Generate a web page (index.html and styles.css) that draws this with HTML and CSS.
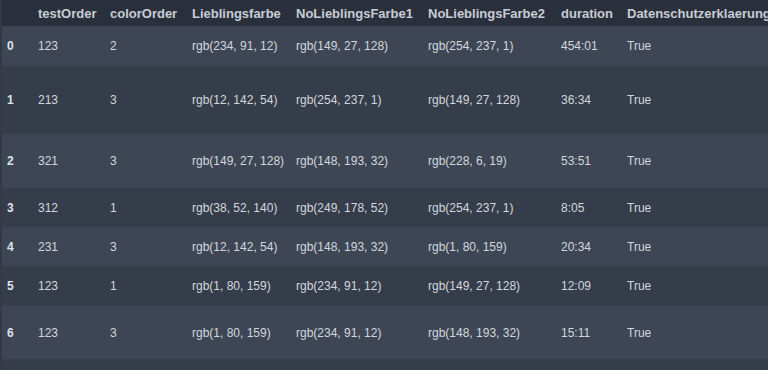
FILE: index.html
```html
<!DOCTYPE html>
<html>
<head>
<meta charset="utf-8">
<link rel="stylesheet" href="styles.css">
</head>
<body>
<div class="wrap">
<table class="df">
<colgroup>
<col class="c0"><col class="c1"><col class="c2"><col class="c3"><col class="c4"><col class="c5"><col class="c6"><col class="c7">
</colgroup>
<thead>
<tr><th></th><th>testOrder</th><th>colorOrder</th><th>Lieblingsfarbe</th><th>NoLieblingsFarbe1</th><th>NoLieblingsFarbe2</th><th>duration</th><th>Datenschutzerklaerung</th></tr>
</thead>
<tbody>
<tr class="odd h40"><th>0</th><td>123</td><td>2</td><td>rgb(234, 91, 12)</td><td>rgb(149, 27, 128)</td><td>rgb(254, 237, 1)</td><td>454:01</td><td>True</td></tr>
<tr class="even h68"><th>1</th><td>213</td><td>3</td><td>rgb(12, 142, 54)</td><td>rgb(254, 237, 1)</td><td>rgb(149, 27, 128)</td><td>36:34</td><td>True</td></tr>
<tr class="odd h54"><th>2</th><td>321</td><td>3</td><td>rgb(149, 27, 128)</td><td>rgb(148, 193, 32)</td><td>rgb(228, 6, 19)</td><td>53:51</td><td>True</td></tr>
<tr class="even h39"><th>3</th><td>312</td><td>1</td><td>rgb(38, 52, 140)</td><td>rgb(249, 178, 52)</td><td>rgb(254, 237, 1)</td><td>8:05</td><td>True</td></tr>
<tr class="odd h39"><th>4</th><td>231</td><td>3</td><td>rgb(12, 142, 54)</td><td>rgb(148, 193, 32)</td><td>rgb(1, 80, 159)</td><td>20:34</td><td>True</td></tr>
<tr class="even h40"><th>5</th><td>123</td><td>1</td><td>rgb(1, 80, 159)</td><td>rgb(234, 91, 12)</td><td>rgb(149, 27, 128)</td><td>12:09</td><td>True</td></tr>
<tr class="odd h53"><th>6</th><td>123</td><td>3</td><td>rgb(1, 80, 159)</td><td>rgb(234, 91, 12)</td><td>rgb(148, 193, 32)</td><td>15:11</td><td>True</td></tr>
<tr class="even h11"><th></th><td></td><td></td><td></td><td></td><td></td><td></td><td></td></tr>
</tbody>
</table>
</div>
</body>
</html>
```
FILE: styles.css
```css
html, body {
  margin: 0;
  padding: 0;
  background: #333a46;
  overflow: hidden;
  width: 768px;
  height: 370px;
}
.wrap {
  padding-left: 2px;
  width: 900px;
}
.df {
  border-collapse: collapse;
  table-layout: fixed;
  width: 880px;
  font-family: "Liberation Sans", Arial, sans-serif;
  font-size: 12px;
  color: #d3d7dd;
}
.c0 { width: 29px; }
.c1 { width: 72px; }
.c2 { width: 82px; }
.c3 { width: 104px; }
.c4 { width: 132px; }
.c5 { width: 133px; }
.c6 { width: 66px; }
.c7 { width: 262px; }
.df th, .df td {
  text-align: left;
  padding: 0 0 0 7px;
  white-space: nowrap;
  overflow: hidden;
  vertical-align: middle;
}
.df thead tr {
  background: #2a303b;
  height: 26px;
}
.df thead th {
  font-size: 13px;
  font-weight: bold;
  color: #c7ccd4;
  padding-left: 7px;
  padding-top: 1px;
}
.df thead th:first-child { padding-left: 5px; }
.df tbody th {
  font-weight: bold;
  color: #dfe2e7;
  padding-left: 5px;
}
.odd { background: #3e4656; }
.even { background: #363d4a; }
.h40 { height: 40px; }
.h68 { height: 68px; }
.h54 { height: 54px; }
.h39 { height: 39px; }
.h53 { height: 53px; }
.h11 { height: 11px; }
```
